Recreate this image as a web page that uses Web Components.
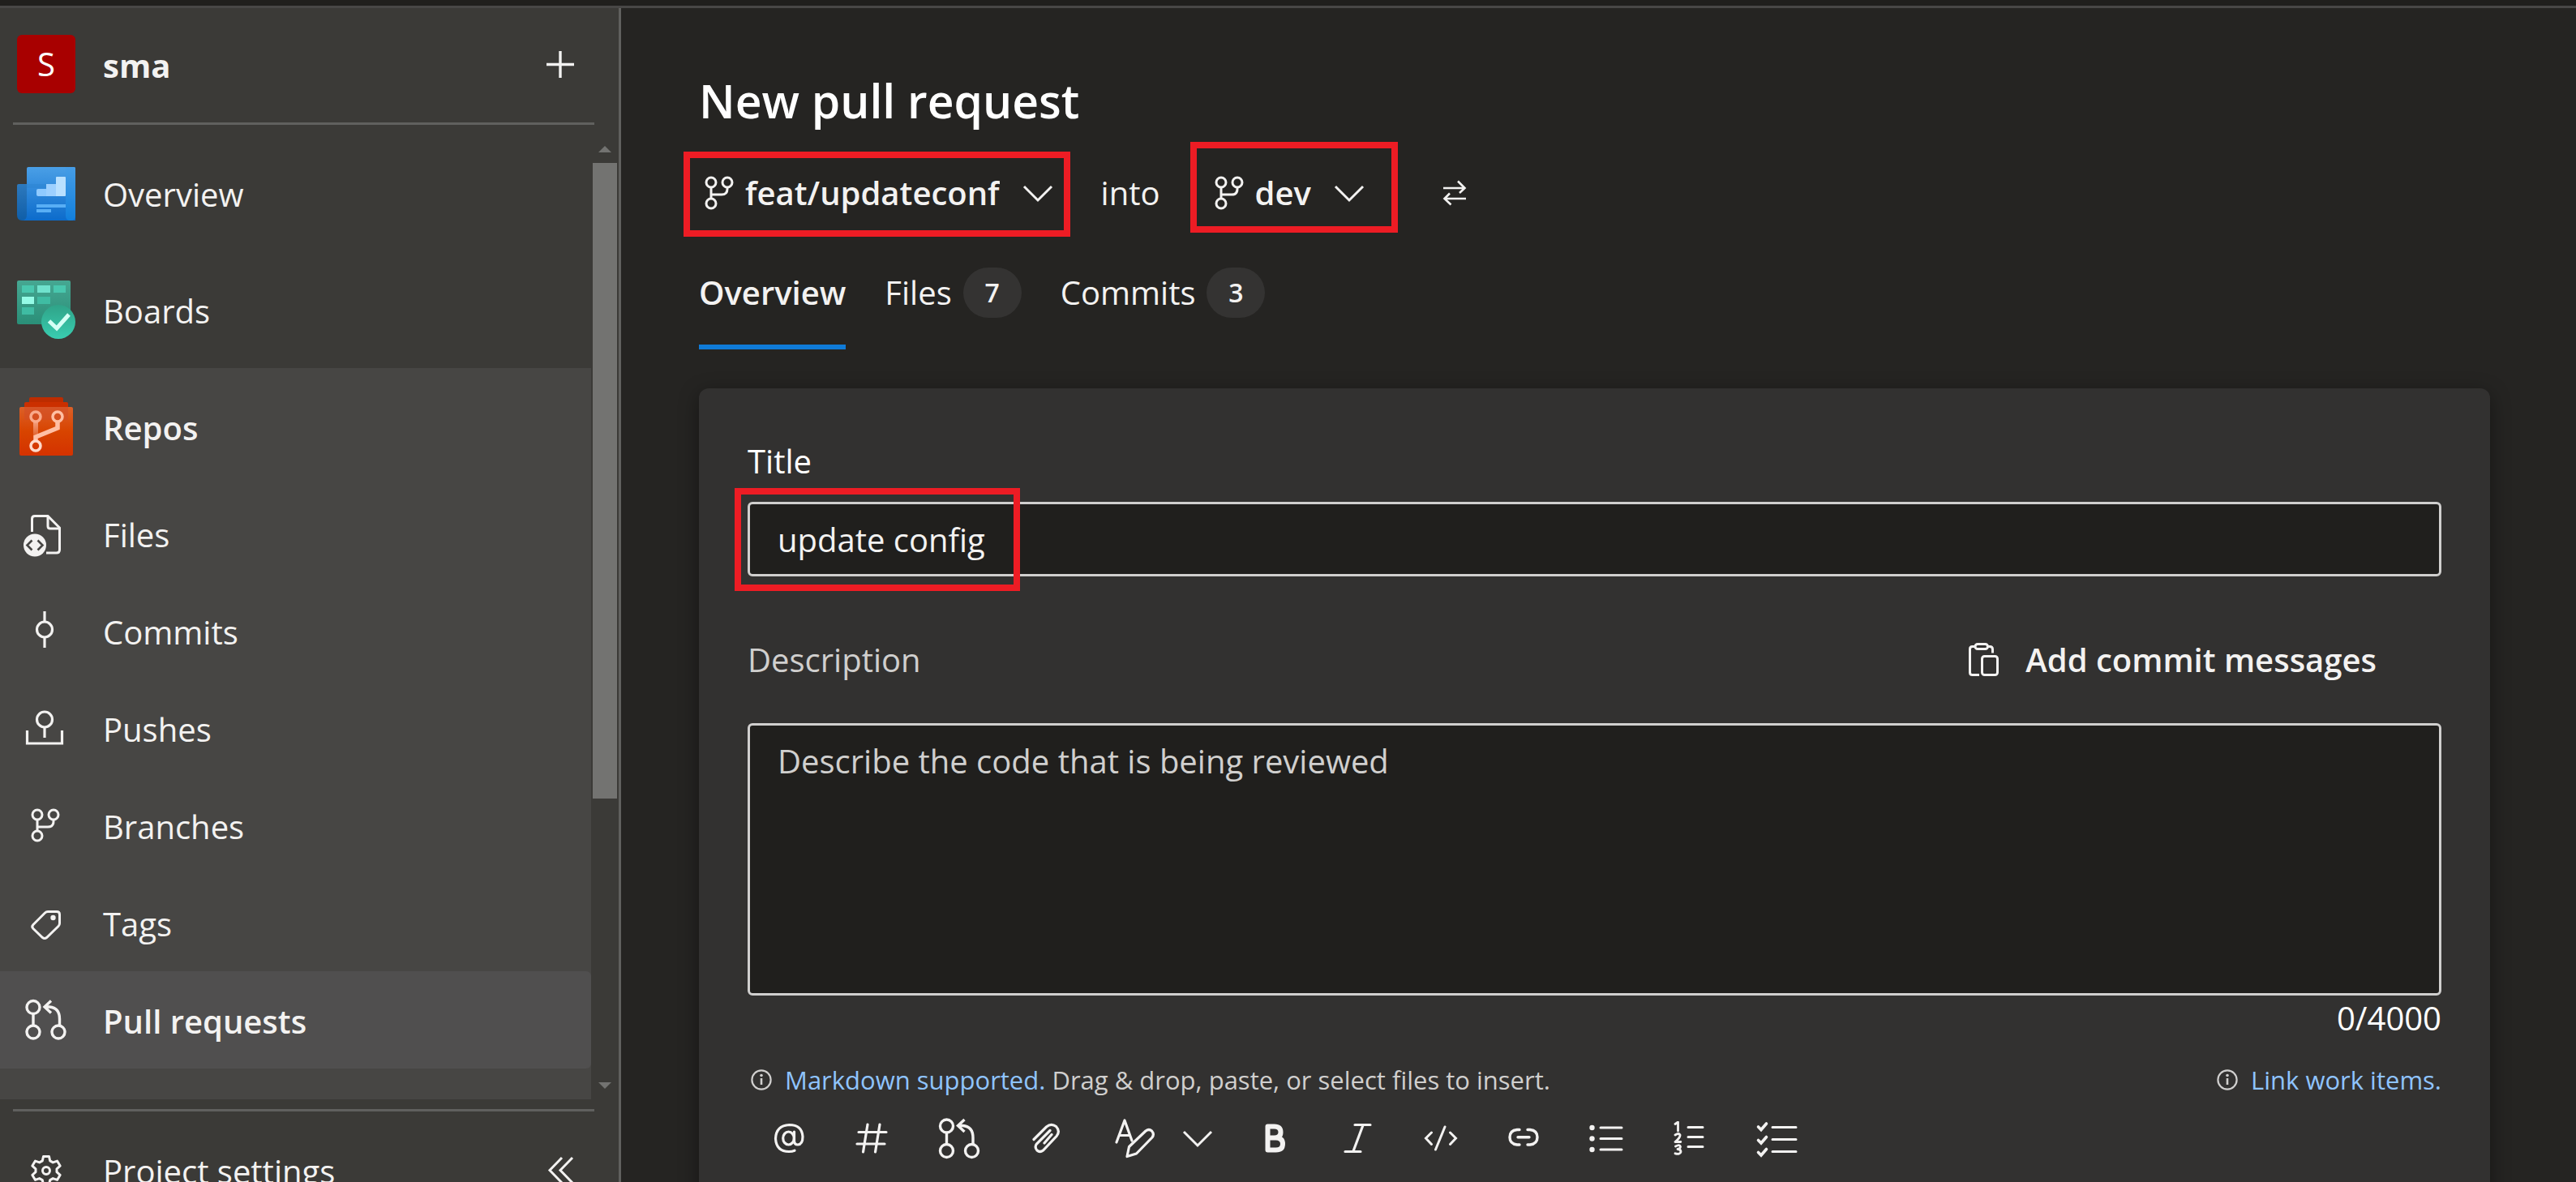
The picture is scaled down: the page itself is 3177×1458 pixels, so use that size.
<!DOCTYPE html>
<html lang="en">
<head>
<meta charset="utf-8">
<title>New pull request</title>
<style>
  html, body { margin: 0; height: 100%; }
  body {
    --ui-font: "Open Sans", "Noto Sans", sans-serif;
    --text-2: #d0cfce;
    --rule: #60605e;
    --accent: #0f7bd8;
    --link: #8fc4ff;
    --mark: #ed1c24;
    background: #252422;
    color: #f3f2f1;
    font: 400 40px/56px var(--ui-font);
    overflow: hidden;
  }
</style>
</head>
<body>
<pr-app></pr-app>

<script>
/* Line icons use the current colour; each entry is [width, height, markup]. */
const branchShape = '<g fill="none" stroke="currentColor" stroke-width="3"><circle cx="8" cy="8" r="6"/><circle cx="28" cy="8" r="6"/><circle cx="8" cy="34" r="6"/><path d="M8 14v14M28 14v2q0 7-7 7H8"/></g>';
const pullShape = '<g fill="none" stroke="currentColor" stroke-width="3.4"><circle cx="20" cy="20.5" r="8"/><circle cx="20" cy="51" r="8"/><circle cx="51" cy="51" r="8"/><path d="M20 29v14M34 20h6q12.500 1 12.500 15v8M42 12.500L34 20l8 7.500"/></g>';
const ICONS = {
  plus: [36, 36, '<path d="M18 2v33M1 18.500h34" stroke="currentColor" stroke-width="3.4" fill="none"/>'],
  overview: [72, 72, '<defs><linearGradient id="a" x2="0" y2="1"><stop stop-color="#4a9fe6"/><stop offset="1" stop-color="#0c6bcb"/></linearGradient><linearGradient id="b" x2="0" y2="1"><stop stop-color="#2d79bd"/><stop offset="1" stop-color="#0f5ea8"/></linearGradient><linearGradient id="c" x2="0" y2="1"><stop stop-color="#469de6"/><stop offset="1" stop-color="#117fdc"/></linearGradient></defs><path d="M2 25h14v45H6q-6 0-6-7V27q0-2 2-2z" fill="url(#b)"/><path d="M14 4h56q2 0 2 2v64H6q6 0 6-7V6q0-2 2-2z" fill="url(#a)"/><path d="M60 4h10q2 0 2 2v58q0 6-6 6t-6-6z" fill="url(#c)"/><path d="M12 25h48v5H12z" fill="#2b83d2" opacity=".5"/><path d="M26 31h10v-6h12v15H26q-2 0-2-2v-5q0-2 2-2z" fill="#8fcaff"/><path d="M36 25h12v15H36z" fill="#9dd0ff"/><path d="M49 16h10q1 0 1 1v22q0 1-1 1H48V17q0-1 1-1z" fill="#b9e0ff"/><path d="M24 50h36v4H24zM24 56h18v4H24z" fill="#58aef5"/>'],
  boards: [72, 72, '<defs><linearGradient id="a" x2="0" y2="1"><stop stop-color="#46a792"/><stop offset="1" stop-color="#2a8f78"/></linearGradient><linearGradient id="b" x2="0" y2="1"><stop stop-color="#2fa388"/><stop offset="1" stop-color="#39cdb0"/></linearGradient></defs><rect width="66" height="54" rx="2" fill="url(#a)"/><path d="M6 6h15v9H6zM45 6h15v9H45z" fill="#49c7ae"/><path d="M25 6h16v9H25z" fill="#70e2cd"/><path d="M6 20h15v9H6z" fill="#94fbe6"/><path d="M25 20h16v9H25zM6 33h15v9H6z" fill="#3fbca3"/><circle cx="51" cy="51" r="21" fill="url(#b)"/><path d="M39.500 50l9.500 9 15-17" fill="none" stroke="#d4fff5" stroke-width="5"/>'],
  repos: [72, 72, '<defs><linearGradient id="a" x2="0" y2="1"><stop stop-color="#dc6028"/><stop offset=".5" stop-color="#d84400"/><stop offset="1" stop-color="#d43200"/></linearGradient><linearGradient id="b" x2="0" y2="1"><stop stop-color="#f39c79"/><stop offset="1" stop-color="#e0602a"/></linearGradient></defs><path d="M17 0h38q2 0 2 2v5H15V2q0-2 2-2z" fill="#bd2c00"/><path d="M11 6h50q2 0 2 2v5H9V8q0-2 2-2z" fill="#cb2f00"/><rect x="3" y="12" width="66" height="60" rx="2" fill="url(#a)"/><path d="M9 12h54v16H9z" fill="#d04a28" opacity=".5"/><path d="M20 31h6v17h-6z" fill="url(#b)"/><g fill="none" stroke="#ffbfa4"><path d="M50 31v7L23 49v5" stroke-width="5.5"/><circle cx="23" cy="24" r="6" stroke-width="3.5" stroke="#f9a98a"/><circle cx="50" cy="24" r="6" stroke-width="3.5"/><circle cx="23" cy="60" r="6" stroke-width="3.5" stroke="#ffd9ca"/></g>'],
  files: [72, 72, '<g fill="none" stroke="currentColor" stroke-width="3"><path d="M18.500 34V18q0-3.500 3.500-3.500h16L52.500 29v27q0 4-4 4H36"/><path d="M38 14.500V27q0 3 3 3h12"/></g><circle cx="22" cy="50.500" r="14" fill="currentColor"/><path d="M18.500 44.500l-6 6 6 6M25.500 44.500l6 6-6 6" fill="none" stroke="#474644" stroke-width="2.6"/>'],
  commit: [72, 72, '<g fill="none" stroke="currentColor" stroke-width="3.2"><circle cx="34" cy="34.500" r="9.5"/><path d="M34 12v13M34 44v13"/></g>'],
  push: [72, 72, '<g fill="none" stroke="currentColor" stroke-width="3.2"><circle cx="34" cy="25.500" r="9.5"/><path d="M34 35v13M12.500 39v16h43V39"/></g>'],
  branches: [72, 72, '<g transform="translate(17 15)">' + branchShape + '</g>'],
  tag: [72, 72, '<path d="M38 22.500h11q3.500 0 3.500 3.500v11q0 2-1.500 3.500L36.500 54.500q-2.500 2-5 0L20 43.500q-2.500-2.500 0-5L34.500 24q1.500-1.500 3.500-1.500z" fill="none" stroke="currentColor" stroke-width="3"/><circle cx="44.500" cy="30" r="3.200" fill="currentColor"/>'],
  pull: [72, 72, pullShape],
  gear: [72, 72, '<g fill="none" stroke="currentColor" stroke-width="3" stroke-linejoin="round"><path d="M32.500 19.500h7l1.200 5.400 3.600 2 5.200-1.800 3.600 6-4.100 3.700v3.900l4.100 3.700-3.600 6-5.200-1.800-3.600 2-1.200 5.400h-7l-1.200-5.400-3.600-2-5.200 1.800-3.600-6 4.100-3.700v-3.900l-4.100-3.700 3.600-6 5.200 1.800 3.600-2z"/><circle cx="36" cy="37" r="4.5"/></g>'],
  collapse: [36, 36, '<path d="M20 3L5 18.500 20 34M33 3L18 18.500 33 34" fill="none" stroke="currentColor" stroke-width="3"/>'],
  branch: [36, 42, branchShape],
  chevron: [42, 42, '<path d="M4 13l17 17 17-17" fill="none" stroke="currentColor" stroke-width="3"/>'],
  swap: [32, 32, '<path d="M2 10h26M20 1.500L28.500 10 22 16M30 23H4M10 16.500L3.500 23l8 7.500" fill="none" stroke="currentColor" stroke-width="2.6"/>'],
  clipboard: [42, 42, '<g fill="none" stroke="currentColor" stroke-width="3"><path d="M15 39.500H6.500q-3 0-3-3v-29q0-3 3-3H10M25 4.500h3q3.500 0 3.500 3.500v4.500"/><rect x="10" y="1.500" width="15.500" height="6" rx="3"/><rect x="18.500" y="16.500" width="19" height="23" rx="3"/></g>'],
  info: [26, 26, '<circle cx="13" cy="13" r="11.600" fill="none" stroke="currentColor" stroke-width="2.2"/><path d="M13 11v8" stroke="currentColor" stroke-width="2.6"/><circle cx="13" cy="7.500" r="1.800" fill="currentColor"/>'],
  mention: [42, 42, '<g fill="none" stroke="currentColor" stroke-width="3.2" stroke-linecap="round"><ellipse cx="20.500" cy="21" rx="6.8" ry="8"/><path d="M27.500 13v11q0 5 4.500 5 6-.5 6-10Q37 4.500 21.500 4.500 5 5.500 4.500 21.500 5.500 37.500 21 37.500q4 0 7-1.300"/></g>'],
  hash: [42, 42, '<path d="M16 4L10.500 38M31 4L25.500 38M5 13.500h34M3 28h34" fill="none" stroke="currentColor" stroke-width="3.2" stroke-linecap="round"/>'],
  pullTool: [54, 54, '<g transform="translate(-8.5 -8.5)">' + pullShape + '</g>'],
  clip: [42, 42, '<path d="M5 22.500L20.500 7q6-5 12-.5 5.500 6 .5 12L16.500 36q-4 3-7.500 0-3.500-4-.5-8L25 11.500M18 27L27 16.500" fill="none" stroke="currentColor" stroke-width="3.2" stroke-linecap="round"/>'],
  format: [54, 54, '<g fill="none" stroke="currentColor" stroke-width="3.2" stroke-linecap="round" stroke-linejoin="round"><path d="M5 32L15 5l9 25M9 23.500h12"/><path d="M18 49.500l2.500-12L41 18q4-3 7.500 0 3.500 4 .5 8L29.500 46z"/></g>'],
  bold: [42, 42, '<path d="M11.500 6.500h8q8 0 8 7t-8 7h-8h10q8.500 0 8.500 7.500t-8.500 7.500H11.500z" fill="none" stroke="currentColor" stroke-width="6" stroke-linejoin="round"/>'],
  italic: [42, 42, '<path d="M17 4.500h19M5 37.500h19M27 5L15 37" fill="none" stroke="currentColor" stroke-width="3.2" stroke-linecap="round"/>'],
  code: [42, 42, '<path d="M9.500 14L2.500 21l7 7.500M32.500 14l7 7-7 7.500M26 7L14.500 35" fill="none" stroke="currentColor" stroke-width="3" stroke-linecap="round"/>'],
  link: [42, 42, '<path d="M16 10.500h-3q-9 1-9 9.200t9 9.300h3M26 10.500h3q9 1 9 9.200T29 29h-3M14 19.700h14" fill="none" stroke="currentColor" stroke-width="3.4" stroke-linecap="round"/>'],
  bullets: [42, 42, '<path d="M14 8h26M14 21.500h26M14 35h26" stroke="currentColor" stroke-width="3" stroke-linecap="round"/><g fill="currentColor"><circle cx="3.500" cy="8" r="3.200"/><circle cx="3.500" cy="21.500" r="3.200"/><circle cx="3.500" cy="35" r="3.200"/></g>'],
  numbers: [42, 42, '<path d="M20 7.500h18M20 19.500h18M20 31.500h18" stroke="currentColor" stroke-width="3" stroke-linecap="round"/><path d="M4 3.500L7.500 1v11M4 17q4.500-3 6 0 .5 3-6 8.500h6.800M4.500 31q5.500-3 6 .5-.5 3-3.500 3 4 .3 4 3.300-1 3.700-7 2" fill="none" stroke="currentColor" stroke-width="2.8" stroke-linecap="round" stroke-linejoin="round"/>'],
  checks: [54, 54, '<path d="M22 13.500h29M22 28.500h29M22 43.500h29" stroke="currentColor" stroke-width="3" stroke-linecap="round"/><path d="M4.500 13l3.500 3.500L14.500 9M4.500 29.500l3.500 3.500 6.500-7.500M4.500 44.500l3.500 3.500 6.500-7.500" fill="none" stroke="currentColor" stroke-width="3.6" stroke-linecap="round"/>']
};

customElements.define('ui-icon', class extends HTMLElement {
  static observedAttributes = ['name'];
  constructor() {
    super();
    this.attachShadow({ mode: 'open' });
  }
  attributeChangedCallback(_, __, name) {
    const [w, h, body] = ICONS[name];
    this.shadowRoot.innerHTML =
      `<style>:host { display: block; flex: none; } svg { display: block; }</style>
       <svg width="${w}" height="${h}" viewBox="0 0 ${w} ${h}" aria-hidden="true">${body}</svg>`;
  }
});

/* Registers an element whose shadow root is cloned from the given markup. */
const define = (name, html, setup) => {
  const template = document.createElement('template');
  template.innerHTML = html;
  customElements.define(name, class extends HTMLElement {
    constructor() {
      super();
      this.attachShadow({ mode: 'open' }).append(template.content.cloneNode(true));
    }
    connectedCallback() {
      if (setup) setup(this, this.shadowRoot);
    }
  });
};

/* ---------- side navigation ---------- */
define('nav-item', `
  <style>
    :host { display: block; }
    a {
      display: flex; align-items: center; gap: 34px; box-sizing: border-box;
      height: 144px; padding-left: 21px;
      color: inherit; text-decoration: none;
    }
    span { padding-top: 4px; }
    :host([sub]) a { height: 120px; }
    :host([strong]) a { font-weight: 600; }
    :host([active]) a { background: #504f4f; border-radius: 0 6px 6px 0; }
  </style>
  <a href="#"><ui-icon></ui-icon><span><slot></slot></span></a>
`, (host, root) => root.querySelector('ui-icon').setAttribute('name', host.getAttribute('icon')));

define('nav-scrollbar', `
  <style>
    :host { display: flex; flex-direction: column; align-items: center; flex: none; width: 34px; }
    .arrow { flex: none; height: 35px; display: flex; align-items: center; }
    .up::before, .down::before { content: ""; border: 8px solid transparent; }
    .up::before { border-top: 0; border-bottom-color: #737371; }
    .down::before { border-bottom: 0; border-top-color: #737371; }
    .track { flex: 1; width: 30px; }
    .thumb { height: 70%; background: #737371; }
  </style>
  <div class="arrow up"></div>
  <div class="track"><div class="thumb"></div></div>
  <div class="arrow down"></div>
`);

define('side-nav', `
  <style>
    :host {
      display: flex; flex-direction: column; flex: none; box-sizing: border-box;
      width: 766px; background: #3b3a37; border-right: 3px solid var(--rule);
    }
    button { background: none; border: 0; padding: 0; color: inherit; font: inherit; }
    header, footer { display: flex; align-items: center; flex: none; box-sizing: border-box; }
    header {
      height: 144px; margin: 0 30px 0 16px; padding: 0 24px 4px 5px; gap: 34px;
      border-bottom: 3px solid var(--rule);
    }
    .avatar {
      display: grid; place-items: center; width: 72px; height: 72px;
      border-radius: 6px; background: #a80000; color: #fff;
    }
    .name { flex: 1; font-weight: 700; padding-top: 4px; }
    .middle { flex: 1; min-height: 0; margin: 12px 0; display: flex; }
    nav { flex: 1; display: flex; flex-direction: column; overflow: hidden; }
    .group { flex: 1; background: #474644; }
    footer {
      height: 90px; margin: 0 30px 0 16px; padding-right: 24px; align-items: flex-start;
      border-top: 3px solid var(--rule);
    }
    footer nav-item { flex: 1; margin-left: -16px; }
    footer button { margin-top: 54px; }
  </style>
  <header>
    <span class="avatar">S</span>
    <span class="name">sma</span>
    <button aria-label="Add"><ui-icon name="plus"></ui-icon></button>
  </header>
  <div class="middle">
    <nav aria-label="Project">
      <nav-item icon="overview">Overview</nav-item>
      <nav-item icon="boards">Boards</nav-item>
      <div class="group">
        <nav-item icon="repos" strong>Repos</nav-item>
        <nav-item icon="files" sub>Files</nav-item>
        <nav-item icon="commit" sub>Commits</nav-item>
        <nav-item icon="push" sub>Pushes</nav-item>
        <nav-item icon="branches" sub>Branches</nav-item>
        <nav-item icon="tag" sub>Tags</nav-item>
        <nav-item icon="pull" sub strong active>Pull requests</nav-item>
      </div>
    </nav>
    <nav-scrollbar></nav-scrollbar>
  </div>
  <footer>
    <nav-item icon="gear">Project settings</nav-item>
    <button aria-label="Collapse"><ui-icon name="collapse"></ui-icon></button>
  </footer>
`);

/* ---------- red frame drawn over whatever it wraps ---------- */
define('mark-frame', `
  <style>
    :host { display: block; position: relative; }
    .frame {
      position: absolute; inset: var(--frame-inset); width: var(--frame-width, auto);
      border: 8px solid var(--mark); pointer-events: none;
    }
  </style>
  <slot></slot><div class="frame"></div>
`);

/* ---------- page heading ---------- */
define('branch-picker', `
  <style>
    :host { display: block; }
    label { display: flex; align-items: center; height: 60px; padding-left: 7px; }
    select {
      appearance: none; field-sizing: content; background: none; border: 0; margin: 0 26px 0 14px; padding: 0;
      color: inherit; font: inherit; font-weight: 600;
    }
  </style>
  <label>
    <ui-icon name="branch"></ui-icon>
    <select><option></option></select>
    <ui-icon name="chevron"></ui-icon>
  </label>
`, (host, root) => {
  root.querySelector('option').textContent = host.getAttribute('value');
  root.querySelector('select').setAttribute('aria-label', host.getAttribute('label'));
});

define('pr-tab', `
  <style>
    :host { display: block; }
    a {
      display: flex; align-items: center; gap: 14px; height: 68px; padding-bottom: 30px;
      border-bottom: 6px solid transparent; color: inherit; text-decoration: none;
    }
    :host([selected]) a { font-weight: 600; border-color: var(--accent); }
    .count {
      display: grid; place-items: center; width: 72px; height: 62px; border-radius: 31px;
      background: #343332; font-size: 32px; font-weight: 600;
    }
  </style>
  <a href="#"><slot></slot></a>
`, (host, root) => {
  if (!host.hasAttribute('count') || root.querySelector('.count')) return;
  const badge = document.createElement('span');
  badge.className = 'count';
  badge.textContent = host.getAttribute('count');
  root.querySelector('a').append(badge);
});

define('pr-heading', `
  <style>
    :host { display: block; }
    h1 { margin: 0; font-size: 57px; line-height: 72px; font-weight: 600; color: #fff; }
    .branches { display: flex; align-items: center; margin-top: 48px; }
    .into { margin: 0 60px 0 57px; }
    .source { --frame-inset: -21px -19px -24px -19px; }
    .target { --frame-inset: -33px -39px -19px -23px; }
    button { background: none; border: 0; padding: 0; color: inherit; margin-left: 93px; }
    .tabs { display: flex; gap: 48px; margin-top: 59px; }
  </style>
  <h1>New pull request</h1>
  <div class="branches">
    <mark-frame class="source"><branch-picker label="Source branch" value="feat/updateconf"></branch-picker></mark-frame>
    <span class="into">into</span>
    <mark-frame class="target"><branch-picker label="Target branch" value="dev"></branch-picker></mark-frame>
    <button aria-label="Switch source and target"><ui-icon name="swap"></ui-icon></button>
  </div>
  <div class="tabs">
    <pr-tab selected>Overview</pr-tab>
    <pr-tab count="7">Files</pr-tab>
    <pr-tab count="3">Commits</pr-tab>
  </div>
`);

/* ---------- form ---------- */
define('editor-toolbar', `
  <style>
    :host { display: flex; height: 60px; }
    button { background: none; border: 0; padding: 0 30px; color: inherit; display: flex; align-items: center; }
    .menu { padding: 0; margin-right: 24px; }
  </style>
  <button aria-label="Mention"><ui-icon name="mention"></ui-icon></button>
  <button aria-label="Work item"><ui-icon name="hash"></ui-icon></button>
  <button aria-label="Pull request"><ui-icon name="pullTool"></ui-icon></button>
  <button aria-label="Attach"><ui-icon name="clip"></ui-icon></button>
  <button aria-label="Format"><ui-icon name="format"></ui-icon></button>
  <button aria-label="Format options" class="menu"><ui-icon name="chevron"></ui-icon></button>
  <button aria-label="Bold"><ui-icon name="bold"></ui-icon></button>
  <button aria-label="Italic"><ui-icon name="italic"></ui-icon></button>
  <button aria-label="Code"><ui-icon name="code"></ui-icon></button>
  <button aria-label="Link"><ui-icon name="link"></ui-icon></button>
  <button aria-label="Bulleted list"><ui-icon name="bullets"></ui-icon></button>
  <button aria-label="Numbered list"><ui-icon name="numbers"></ui-icon></button>
  <button aria-label="Task list"><ui-icon name="checks"></ui-icon></button>
`);

define('pr-form', `
  <style>
    :host {
      display: block; padding: 60px; border-radius: 12px; background: #323130;
      box-shadow: 0 6px 24px rgba(0, 0, 0, .4);
    }
    label { display: block; line-height: 60px; }
    .title { color: #fff; }
    .title-field { margin-top: 20px; --frame-inset: -17px auto -18px -16px; --frame-width: 336px; }
    input, textarea {
      display: block; box-sizing: border-box; width: 100%; padding: 0 34px;
      border: 3px solid #d0cfce; border-radius: 6px; background: #201f1d;
      color: inherit; font: inherit;
    }
    input { height: 92px; }
    textarea { height: 336px; padding-top: 16px; margin-top: 42px; resize: none; }
    ::placeholder { color: var(--text-2); opacity: 1; }
    .row { display: flex; align-items: center; justify-content: space-between; }
    .desc { height: 72px; margin-top: 67px; color: var(--text-2); }
    .desc button {
      display: flex; align-items: center; gap: 30px; background: none; border: 0; padding: 0 80px 0 0;
      color: #f3f2f1; font: inherit; font-weight: 600;
    }
    .count { text-align: right; color: #fff; }
    .help { margin-top: 20px; padding-left: 4px; font-size: 31px; color: var(--text-2); }
    .help div { display: flex; align-items: center; gap: 16px; }
    a { color: var(--link); text-decoration: none; }
    editor-toolbar { margin-top: 14px; }
  </style>
  <label class="title" for="title">Title</label>
  <mark-frame class="title-field"><input id="title" value="update config"></mark-frame>
  <div class="row desc">
    <label for="desc">Description</label>
    <button><ui-icon name="clipboard"></ui-icon>Add commit messages</button>
  </div>
  <textarea id="desc" placeholder="Describe the code that is being reviewed"></textarea>
  <div class="count">0/4000</div>
  <div class="row help">
    <div><ui-icon name="info"></ui-icon><span><a href="#">Markdown supported.</a> Drag &amp; drop, paste, or select files to insert.</span></div>
    <div><ui-icon name="info"></ui-icon><a href="#">Link work items.</a></div>
  </div>
  <editor-toolbar></editor-toolbar>
`);

/* ---------- application frame ---------- */
define('pr-app', `
  <style>
    :host { display: flex; flex-direction: column; height: 100vh; overflow: hidden; }
    .top { flex: none; height: 7px; background: #201f1d; border-bottom: 3px solid #484746; }
    .body { flex: 1; min-height: 0; display: flex; }
    main { flex: 1; min-width: 0; padding: 78px 106px 0 96px; }
    pr-form { margin-top: 48px; }
  </style>
  <div class="top"></div>
  <div class="body">
    <side-nav></side-nav>
    <main>
      <pr-heading></pr-heading>
      <pr-form></pr-form>
    </main>
  </div>
`);
</script>
</body>
</html>
